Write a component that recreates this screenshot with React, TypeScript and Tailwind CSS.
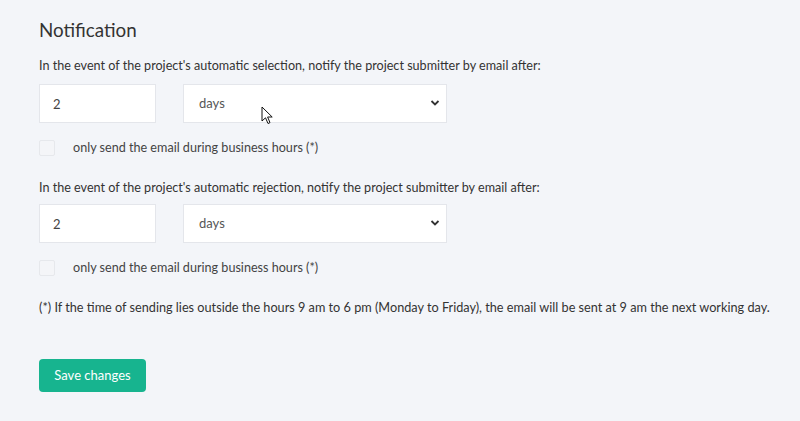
import { useState } from 'react';

function DelayRow() {
  const [amount, setAmount] = useState("2");
  const [unit, setUnit] = useState("days");

  return (
    <div className="flex gap-[27px] mt-[9px]">
      <input
        type="text"
        value={amount}
        onChange={(e) => setAmount(e.target.value)}
        className="w-[117px] h-[39px] bg-white border border-[#e4e6eb] px-[13px] text-[13px] text-[#444] outline-none"
      />
      <div className="relative">
        <select
          value={unit}
          onChange={(e) => setUnit(e.target.value)}
          className="appearance-none w-[264px] h-[39px] bg-white border border-[#e4e6eb] pl-[15px] text-[13px] text-[#555] outline-none"
        >
          <option value="hours">hours</option>
          <option value="days">days</option>
          <option value="weeks">weeks</option>
        </select>
        <svg className="absolute right-[7px] top-[15px] pointer-events-none" width="10" height="8" viewBox="0 0 10 8">
          <path d="M1.5 2 L5 5.5 L8.5 2" fill="none" stroke="#333" strokeWidth="1.8" />
        </svg>
      </div>
    </div>
  );
}

function BusinessHours() {
  return (
    <label className="flex items-center h-[16px]">
      <input type="checkbox" className="appearance-none w-[16px] h-[16px] border border-[#e6e8ec] bg-[#f4f5f8] rounded-[2px]" />
      <span className="ml-[18px] text-[12.6px] text-[#444]">only send the email during business hours (*)</span>
    </label>
  );
}

function App() {
  return (
    <div className="relative w-[800px] h-[421px] bg-[#f3f5f9] px-[39px] pt-[16px] text-[#333] font-['Lato','Liberation_Sans',sans-serif] overflow-hidden">
      <h2 className="text-[18.8px] leading-[28px] text-[#333]">Notification</h2>

      <p className="mt-[13px] text-[12.6px] leading-[18px]">
        In the event of the project's automatic selection, notify the project submitter by email after:
      </p>
      <DelayRow />
      <div className="mt-[17px]">
        <BusinessHours />
      </div>

      <p className="mt-[23px] text-[12.6px] leading-[18px]">
        In the event of the project's automatic rejection, notify the project submitter by email after:
      </p>
      <div className="-mt-[2px]">
        <DelayRow />
      </div>
      <div className="mt-[17px]">
        <BusinessHours />
      </div>

      <p className="mt-[22px] text-[12.7px] leading-[18px] whitespace-nowrap">
        (*) If the time of sending lies outside the hours 9 am to 6 pm (Monday to Friday), the email will be sent at 9 am the next working day.
      </p>

      <button className="mt-[43px] h-[33px] w-[107px] bg-[#17b48f] text-white text-[13px] rounded-[4px]">
        Save changes
      </button>

      {/* mouse pointer from the screenshot */}
      <svg className="absolute left-[261px] top-[106px] pointer-events-none" width="13" height="20" viewBox="0 0 13 20">
        <path d="M1 1 L1 15 L4.5 11.8 L7 17.5 L9 16.6 L6.6 11 L11.2 11 Z" fill="white" stroke="#111" strokeWidth="1" strokeLinejoin="round" />
      </svg>
    </div>
  );
}

export default App
